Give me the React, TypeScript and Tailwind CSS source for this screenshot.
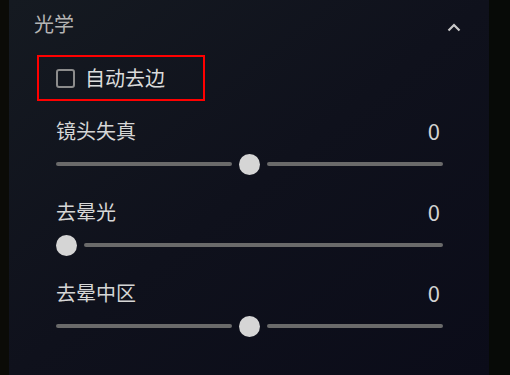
import React from "react";

const font = { fontFamily: '"Noto Sans CJK SC", "Noto Sans", sans-serif' };

function Slider({ label, mid }: { label: string; mid: boolean }) {
  return (
    <div className="flex flex-col h-[81px]">
      <div className="flex h-[24px] items-center justify-between pl-[47px] pr-[49px]">
        <span className="text-[20px] leading-none text-[#d6d6d6]">{label}</span>
        <span className="mb-[2px] text-[22px] leading-none text-[#d2d2d2]">0</span>
      </div>
      <div className="mt-[9px] flex h-[24px] items-center gap-[7px] pl-[47px] pr-[46px]">
        {mid && <div className="h-[4px] flex-1 rounded-full bg-[#6a6a6a]" />}
        <div className="h-[21px] w-[21px] shrink-0 rounded-full bg-[#d5d5d5]" />
        <div className="h-[4px] flex-1 rounded-full bg-[#6a6a6a]" />
      </div>
    </div>
  );
}

export default function App() {
  return (
    <div className="flex h-[375px] w-[510px] overflow-hidden bg-[#070a07]" style={font}>
      <div className="w-[9px] shrink-0 bg-[#0b0b07]" />
      <div className="flex w-[480px] shrink-0 flex-col bg-gradient-to-br from-[#151a21] via-[#0f111c] to-[#0b0c19]">
        <div className="flex h-[48px] items-center justify-between pl-[25px] pr-[28px]">
          <span className="text-[20px] leading-none text-[#b4b4b4]">光学</span>
          <svg width="14" height="9" viewBox="0 0 14 9" className="mt-[6px]">
            <polyline points="1.5,7.5 7,2 12.5,7.5" fill="none" stroke="#c8c8c8" strokeWidth="2.2" />
          </svg>
        </div>
        <div className="ml-[28px] mt-[7px] flex h-[46px] w-[168px] items-center gap-[10px] border-2 border-[#ff0000] pl-[17px]">
          <div className="h-[19px] w-[19px] rounded-[3px] border-2 border-[#8c8c8c]" />
          <span className="text-[20px] leading-none text-[#dcdcdc]">自动去边</span>
        </div>
        <div className="mt-[18px] flex flex-col">
          <Slider label="镜头失真" mid={true} />
          <Slider label="去晕光" mid={false} />
          <Slider label="去晕中区" mid={true} />
        </div>
      </div>
      <div className="w-[21px] shrink-0 bg-[#070a07]" />
    </div>
  );
}
